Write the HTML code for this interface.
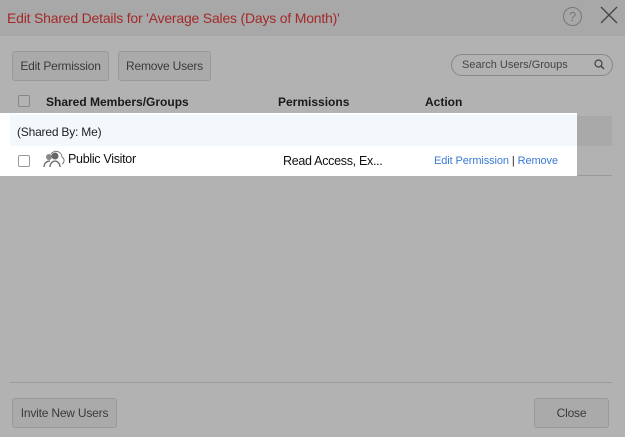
<!DOCTYPE html>
<html><head><style>
body{margin:0;width:625px;height:437px;background:#b2b2b2;font-family:"Liberation Sans",sans-serif;position:relative;overflow:hidden}
.abs{position:absolute}
.hdr{left:0;top:0;width:625px;height:36px;background:#a8a8a8}
.title{left:7px;top:10px;font-size:14px;color:#a32a2a;letter-spacing:-0.2px}
.btn{background:#aaaaaa;border:1px solid #999;border-radius:3px;color:#3a3a3a;font-size:12px;box-sizing:border-box;text-align:center;letter-spacing:-0.2px}
.cb{width:12px;height:12px;border:1px solid #888;border-radius:2px;box-sizing:border-box}
.th{font-size:12px;font-weight:bold;color:#1a1a1a;top:95px}
</style></head><body>
<div class="abs hdr"></div>
<div class="abs title">Edit Shared Details for 'Average Sales (Days of Month)'</div>
<div class="abs" style="left:563px;top:7px;width:19px;height:19px;border:1px solid #777;border-radius:50%;box-sizing:border-box;font-size:13px;color:#777;text-align:center;line-height:17px">?</div>
<svg class="abs" style="left:600px;top:6px" width="18" height="18"><path d="M1 1L17 17M17 1L1 17" stroke="#444" stroke-width="1.3"/></svg>
<div class="abs btn" style="left:12px;top:51px;width:97px;height:30px;line-height:28px">Edit Permission</div>
<div class="abs btn" style="left:118px;top:51px;width:93px;height:30px;line-height:28px">Remove Users</div>
<div class="abs" style="left:451px;top:54px;width:162px;height:22px;border:1px solid #888;border-radius:11px;box-sizing:border-box;font-size:11px;color:#444;line-height:20px;padding-left:10px">Search Users/Groups</div>
<svg class="abs" style="left:594px;top:59px" width="11" height="11"><circle cx="4.5" cy="4.5" r="3.5" stroke="#444" fill="none" stroke-width="1.2"/><path d="M7 7L10 10" stroke="#444" stroke-width="1.4"/></svg>
<div class="abs cb" style="left:18px;top:95px"></div>
<div class="abs th" style="left:46px">Shared Members/Groups</div>
<div class="abs th" style="left:278px">Permissions</div>
<div class="abs th" style="left:425px">Action</div>
<div class="abs" style="left:577px;top:116px;width:35px;height:30px;background:#a9a9a9"></div>
<div class="abs" style="left:10px;top:175px;width:602px;height:1px;background:#999"></div>
<div class="abs" style="left:0;top:113px;width:577px;height:63px;background:#fff"></div>
<div class="abs" style="left:10px;top:115px;width:567px;height:31px;background:#f3f8fd"></div>
<div class="abs" style="left:17px;top:125px;font-size:12px;color:#222;letter-spacing:-0.2px">(Shared By: Me)</div>
<div class="abs cb" style="left:18px;top:155px;border-color:#999"></div>
<svg class="abs" style="left:39px;top:150px" width="26" height="18"><circle cx="10" cy="7" r="3" fill="#888"/><circle cx="16" cy="6" r="3.5" fill="#666"/><path d="M5 17c0-4 3-6 6-6M11 17c0-4 3-6 5-6s5 2 5 6" stroke="#666" fill="none" stroke-width="1.3"/><path d="M12 4a6 6 0 0 1 11 3a4 4 0 0 1 0 7" stroke="#777" fill="none"/></svg>
<div class="abs" style="left:68px;top:152px;font-size:12.5px;color:#111;letter-spacing:-0.3px">Public Visitor</div>
<div class="abs" style="left:283px;top:154px;font-size:12.5px;color:#111;letter-spacing:-0.3px">Read Access, Ex...</div>
<div class="abs" style="left:434px;top:155px;font-size:11px;color:#3a7bd5;letter-spacing:-0.1px">Edit Permission <span style="color:#222">|</span> Remove</div>
<div class="abs" style="left:10px;top:382px;width:602px;height:1px;background:#9c9c9c"></div>
<div class="abs btn" style="left:12px;top:398px;width:105px;height:30px;line-height:28px">Invite New Users</div>
<div class="abs btn" style="left:534px;top:398px;width:75px;height:30px;line-height:28px">Close</div>
</body></html>
